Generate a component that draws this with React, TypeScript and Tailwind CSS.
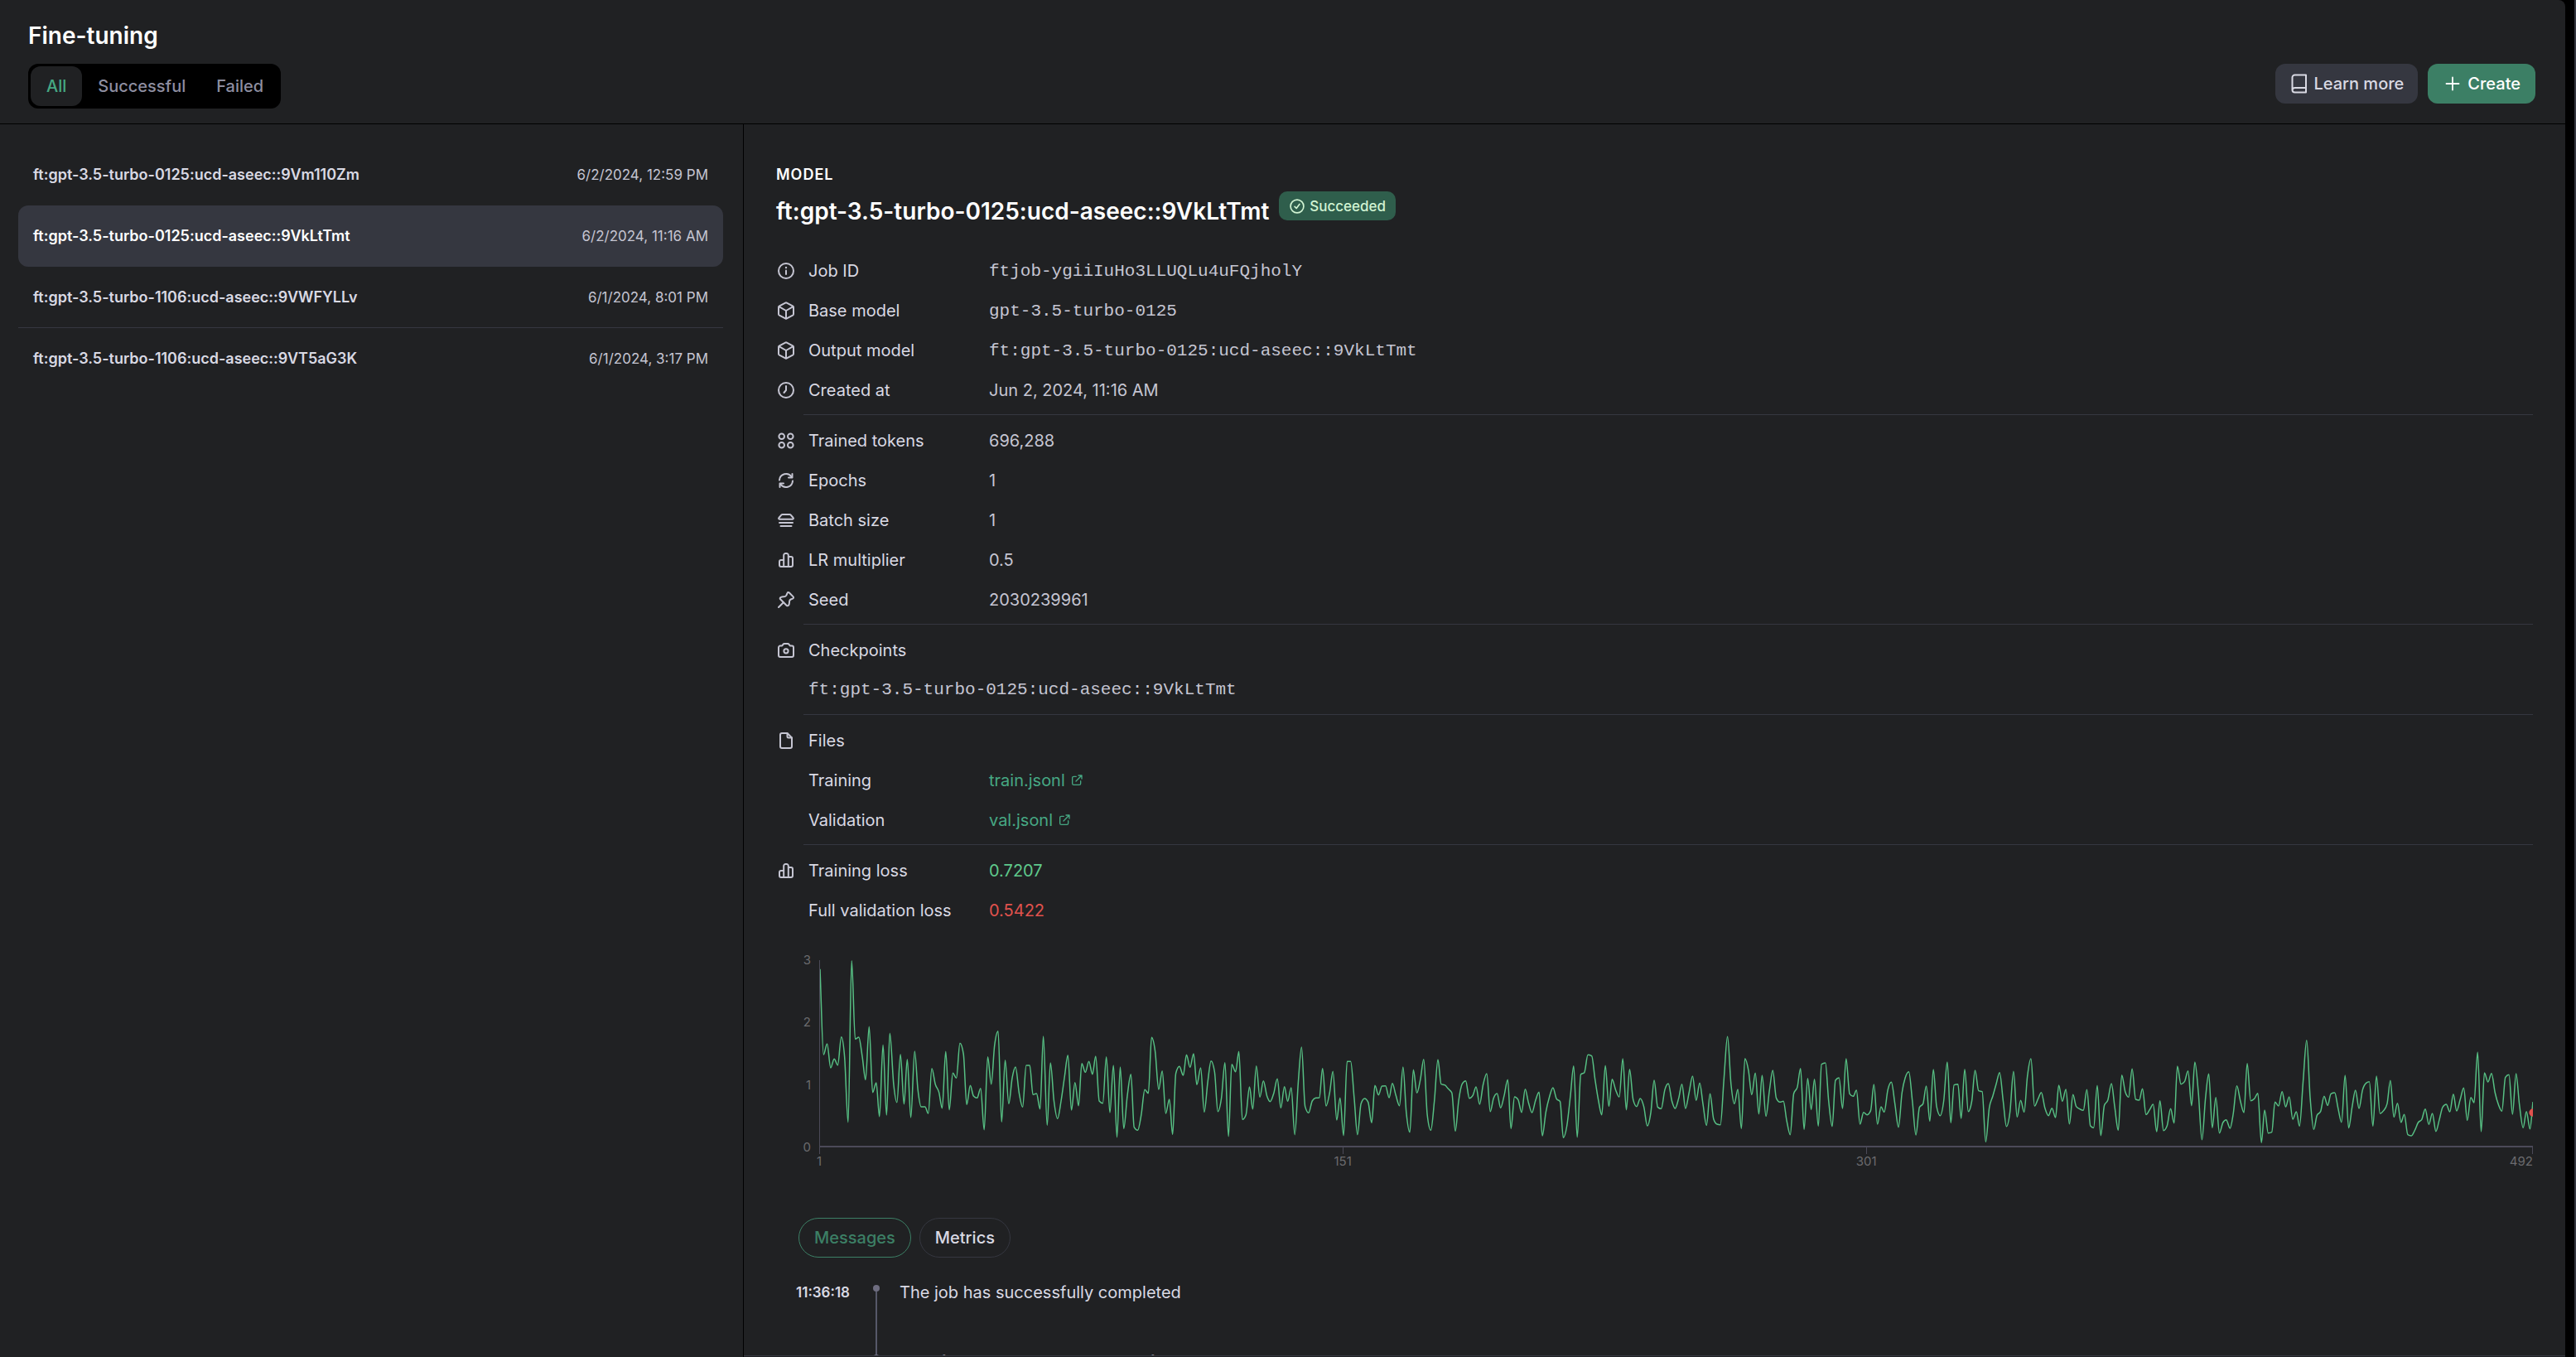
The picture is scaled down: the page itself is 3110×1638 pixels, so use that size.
import type { ReactNode } from "react";

const jobs = [
  { name: "ft:gpt-3.5-turbo-0125:ucd-aseec::9Vm110Zm", date: "6/2/2024, 12:59 PM" },
  { name: "ft:gpt-3.5-turbo-0125:ucd-aseec::9VkLtTmt", date: "6/2/2024, 11:16 AM", selected: true },
  { name: "ft:gpt-3.5-turbo-1106:ucd-aseec::9VWFYLLv", date: "6/1/2024, 8:01 PM", divider: true },
  { name: "ft:gpt-3.5-turbo-1106:ucd-aseec::9VT5aG3K", date: "6/1/2024, 3:17 PM" },
];

/* ---------- Icons ---------- */

function Icon({ children, className = "size-6" }: { children: ReactNode; className?: string }) {
  return (
    <svg
      viewBox="0 0 24 24"
      className={className}
      fill="none"
      stroke="currentColor"
      strokeWidth={2}
      strokeLinecap="round"
      strokeLinejoin="round"
      aria-hidden="true"
    >
      {children}
    </svg>
  );
}

const InfoIcon = () => (
  <Icon>
    <circle cx="12" cy="12" r="9" />
    <path d="M12 11.5v4.5" />
    <circle cx="12" cy="8" r="1.2" fill="currentColor" stroke="none" />
  </Icon>
);

const CubeIcon = () => (
  <Icon>
    <path d="M11.1 2.6a2 2 0 0 1 1.8 0l7.1 3.8a2 2 0 0 1 1 1.7v7.8a2 2 0 0 1-1 1.7l-7.1 3.8a2 2 0 0 1-1.8 0L4 17.6a2 2 0 0 1-1-1.7V8.1a2 2 0 0 1 1-1.7z" />
    <path d="M3.5 7.2 12 12l8.5-4.8M12 12v9.5" />
  </Icon>
);

const ClockIcon = () => (
  <Icon>
    <circle cx="12" cy="12" r="9" />
    <path d="M12 7v5l-2.5 3" />
  </Icon>
);

const TokensIcon = () => (
  <Icon>
    <circle cx="6.7" cy="6.7" r="3.3" />
    <circle cx="17.3" cy="6.7" r="3.3" />
    <circle cx="6.7" cy="17.3" r="3.3" />
    <circle cx="17.3" cy="17.3" r="3.3" />
  </Icon>
);

const EpochsIcon = () => (
  <Icon>
    <path d="M4 11.5A8 8 0 0 1 18.6 7.5" />
    <path d="M19.5 4v4.5H15" />
    <path d="M20 12.5A8 8 0 0 1 5.4 16.5" />
    <path d="M4.5 20v-4.5H9" />
  </Icon>
);

const BatchIcon = () => (
  <Icon>
    <path d="M7.8 5h8.4a2 2 0 0 1 1.5.7l2.9 3.3c.7.9.3 1.7-.7 1.7H4.1c-1 0-1.4-.8-.7-1.7l2.9-3.3A2 2 0 0 1 7.800 5z" />
    <path d="M4 15h16M5.5 19h13" />
  </Icon>
);

const BarsIcon = () => (
  <Icon>
    <path d="M9.2 20V6.2A2.2 2.2 0 0 1 11.4 4h1.2a2.2 2.2 0 0 1 2.2 2.2V20" />
    <path d="M9.2 12H6a2 2 0 0 0-2 2v4a2 2 0 0 0 2 2h12a2 2 0 0 0 2-2V10a2 2 0 0 0-2-2h-3.200" />
  </Icon>
);

const PinIcon = () => (
  <Icon>
    <path d="M3 21l5.8-5.8" />
    <path d="M15.9 3.5l4.6 4.6c.9.9.6 2.1-.5 2.5l-2.3.9c-.9.4-1.3.9-1.5 1.8l-.5 3.9c-.1.7-.4 1.2-.9 1.7-.5.6-1.4.6-2 .1L5.1 11.3c-.6-.6-.5-1.5.1-2 .5-.5 1-.8 1.7-.9l3.8-.5c.9-.2 1.4-.6 1.8-1.5l.9-2.3c.4-1.2 1.6-1.5 2.500-.6z" />
  </Icon>
);

const CameraIcon = () => (
  <Icon>
    <path d="M5 6.5h2.2l1.2-1.7A2 2 0 0 1 10 4h4a2 2 0 0 1 1.6.8l1.2 1.7H19a2 2 0 0 1 2 2V18a2 2 0 0 1-2 2H5a2 2 0 0 1-2-2V8.5a2 2 0 0 1 2-2z" />
    <circle cx="12" cy="12.8" r="2.6" />
  </Icon>
);

const FileIcon = () => (
  <Icon>
    <path d="M13.5 3H7a2 2 0 0 0-2 2v14a2 2 0 0 0 2 2h10a2 2 0 0 0 2-2V8.5z" />
    <path d="M13.5 3.2V7a1.5 1.5 0 0 0 1.5 1.5h3.8" />
  </Icon>
);

const ExternalIcon = () => (
  <Icon className="size-4">
    <path d="M11 5H6.5A2.5 2.5 0 0 0 4 7.5v10A2.5 2.5 0 0 0 6.5 20h10a2.5 2.5 0 0 0 2.5-2.5V13" />
    <path d="M15 3h6v6M20.5 3.5 10.5 13.5" />
  </Icon>
);

const BookIcon = () => (
  <Icon>
    <path d="M20 1.5H6.500a3 3 0 0 0-3 3v15a3 3 0 0 0 3 3H20zM4 18.5a3 3 0 0 1 2.5-1.5H20" />
  </Icon>
);

/* ---------- Loss chart ---------- */

/* Samples of the loss curve as x,y pairs on a canvas of 5791 x 675 units, each run counted from its own left edge. */
const runs = [
  {
    start: -138,
    points:
      "138,122 150,432 162,393 174,480 186,448 198,470 210,368 221,440 233,677 245,92 257,376 269,369 281,440 292,523 304,331 316,569 328,534 339,656 351,397 363,651 374,355 387,540 398,605 410,431 422,611 433,449 445,660 458,420 469,560 480,621 493,621 504,645 516,482 528,540 540,568 551,626 563,421 575,632 587,499 599,517 611,391 623,430 634,613 646,544 657,582 669,589 681,554 693,704 705,440 717,539 728,400 740,347 752,676 764,452 776,610 788,515 799,477 811,570 823,622 835,471 847,471 858,577 870,573 882,629 893,366 906,688 917,462 929,600 941,664 953,600 965,510 976,434 988,633 1000,533 1012,617 1023,464 1035,496 1047,457 1059,503 1070,438 1082,600 1094,608 1106,440 1118,642 1130,471 1142,731 1153,477 1165,700 1177,580 1189,503 1200,695 1212,706 1224,650 1236,559 1248,572 1259,370 1271,420 1283,558 1295,491 1307,645 1319,594 1330,721 1341,500 1353,475 1366,507 1377,433 1389,478 1401,429 1412,541 1425,480 1437,640 1449,530 1460,455 1472,495 1483,638 1495,590 1507,461 1519,728 1530,467 1543,494 1554,421",
  },
  {
    start: 1374,
    points:
      "54,667 66,650 78,549 89,629 101,473 113,586 125,527 137,582 148,602 160,572 172,520 184,625 196,548 207,601 219,552 231,722 243,530 254,405 266,620 278,643 290,600 302,589 314,588 325,482 337,618 349,570 360,493 373,669 384,589 396,725 408,457 420,457 432,590 443,722 455,610 467,591 479,604 491,679 502,544 514,578 526,546 538,545 550,588 561,536 573,580 585,617 597,477 608,640 620,713 632,487 644,571 656,520 667,449 679,650 691,706 703,600 715,450 726,539 738,542 750,556 762,570 774,709 785,600 797,538 809,527 821,590 833,580 844,549 856,612 868,540 880,501 892,638 903,590 915,573 927,625 939,580 951,523 962,700 974,585 986,595 998,641 1010,557 1021,605 1033,642 1045,598 1057,568 1068,726 1080,640 1092,585 1104,552 1116,592 1128,602 1139,733 1151,690 1163,580 1174,473 1186,731 1198,504 1210,497 1222,433 1235,437 1246,520 1258,600 1269,650 1281,472 1293,619 1304,521 1316,560 1328,585 1340,447 1352,632 1363,485 1375,595 1387,620 1399,591 1411,620 1423,690 1435,640 1446,525 1458,622 1470,628 1482,560 1494,537 1506,600 1517,627 1529,590 1540,539",
  },
  {
    start: 2886,
    points:
      "40,627 52,570 64,510 76,598 88,535 99,610 111,688 123,574 135,665 147,684 158,686 170,520 182,367 194,540 205,610 217,558 229,700 241,446 253,490 264,577 276,499 288,647 299,507 312,655 324,560 335,489 347,590 359,604 371,601 382,670 394,722 406,573 418,550 429,482 441,703 453,518 465,631 476,521 489,691 500,467 513,462 524,600 536,692 547,525 559,516 571,627 583,447 595,574 607,583 618,561 630,684 642,641 654,650 666,635 677,540 689,684 701,621 712,640 724,560 736,532 748,610 760,695 772,570 783,515 795,494 807,600 819,723 831,623 843,610 854,546 866,673 878,486 889,620 901,653 913,600 925,459 937,679 948,542 961,539 972,663 984,485 996,638 1008,600 1019,489 1031,563 1043,566 1055,748 1067,625 1079,582 1090,540 1102,497 1114,600 1125,692 1137,640 1149,493 1161,658 1173,598 1185,640 1196,510 1208,447 1220,618 1232,592 1243,569 1255,625 1267,653 1279,626 1291,660 1302,543 1314,601 1326,558 1338,683 1350,577 1361,620 1373,629 1385,634 1397,559 1409,690 1420,697 1432,544 1444,725 1456,616 1468,596 1480,537 1491,620 1503,706 1515,506 1527,568 1538,586 1550,484",
  },
  {
    start: 4370,
    points:
      "78,594 90,597 101,556 113,649 125,632 137,612 149,711 160,599 172,707 184,690 196,628 208,680 219,474 231,539 243,530 255,491 267,617 278,459 290,570 302,740 314,590 325,502 337,697 349,587 361,716 373,678 384,668 397,699 408,645 420,545 432,600 444,642 455,464 467,599 479,592 491,572 503,751 514,633 526,716 538,713 549,604 561,618 573,566 585,621 597,585 609,666 621,639 632,691 644,530 656,380 668,590 680,703 691,652 703,638 715,583 727,616 738,574 751,570 762,625 774,677 786,507 798,698 810,620 821,561 833,627 845,560 857,535 868,530 880,691 892,510 904,645 916,635 928,610 939,526 951,658 963,608 975,677 986,649 998,722 1010,726 1022,705 1033,678 1045,667 1057,629 1069,685 1081,645 1093,710 1104,670 1116,622 1128,612 1140,639 1152,575 1163,636 1175,595 1187,553 1199,670 1211,587 1222,606 1234,423 1246,711 1257,498 1269,531 1281,500 1293,570 1305,615 1316,637 1328,514 1340,505 1352,648 1364,501 1375,610 1388,697 1399,638 1411,701 1421,603",
  },
];

const CHART_W = 5791;
const CHART_H = 675;

const samples: [number, number][] = runs.flatMap(({ start, points }) =>
  points.split(" ").map((pair): [number, number] => {
    const [x, y] = pair.split(",").map(Number);
    return [start + x, y - 90];
  }),
);

/* Monotone cubic interpolation, so that the curve never overshoots a sample. */
function monotonePath(p: [number, number][]) {
  const n = p.length;
  const slope: number[] = [];
  for (let i = 0; i < n - 1; i++) slope.push((p[i + 1][1] - p[i][1]) / (p[i + 1][0] - p[i][0]));
  const tangent = p.map((_, i) => {
    if (i === 0) return slope[0];
    if (i === n - 1) return slope[n - 2];
    const a = slope[i - 1];
    const b = slope[i];
    if (a * b <= 0) return 0;
    return Math.sign(a) * Math.min(Math.abs(a), Math.abs(b), Math.abs(a + b) / 4) * 2;
  });
  let d = `M${p[0][0]},${p[0][1]}`;
  for (let i = 0; i < n - 1; i++) {
    const h = (p[i + 1][0] - p[i][0]) / 3;
    d += `C${(p[i][0] + h).toFixed(1)},${(p[i][1] + tangent[i] * h).toFixed(1)} ${(p[i + 1][0] - h).toFixed(1)},${(
      p[i + 1][1] -
      tangent[i + 1] * h
    ).toFixed(1)} ${p[i + 1][0]},${p[i + 1][1]}`;
  }
  return d;
}

const lossPath = monotonePath(samples);

const xTicks = [
  { label: "1", left: "0%", align: "-translate-x-1/2" },
  { label: "151", left: "30.55%", align: "-translate-x-1/2" },
  { label: "301", left: "61.1%", align: "-translate-x-1/2" },
  { label: "492", left: "100%", align: "-translate-x-full" },
];

function LossChart() {
  return (
    <figure aria-label="Training loss per step" className="flex gap-[10px] text-[15px] leading-[15px] text-[#6b6b6e]">
      <div className="-my-2 flex h-[241px] w-[42px] flex-col justify-between text-right">
        {["3", "2", "1", "0"].map((v) => (
          <span key={v}>{v}</span>
        ))}
      </div>
      <div className="min-w-0 flex-1">
        <div className="relative h-[226px] border-b-2 border-l border-[#4b4a58]">
          <svg viewBox={`0 0 ${CHART_W} ${CHART_H}`} preserveAspectRatio="none" className="absolute inset-0 h-[225px] w-full">
            <path d={lossPath} fill="none" stroke="#57c084" strokeWidth={1.5} vectorEffect="non-scaling-stroke" />
            <ellipse cx={CHART_W} cy="552" rx="13" ry="14" fill="#e0524d" />
          </svg>
        </div>
        <div className="relative h-8">
          {xTicks.map((t) => (
            <div key={t.label}>
              <span
                className={t.label === "492" ? "absolute top-0 h-2 w-px -translate-x-px bg-[#4b4a58]" : "absolute top-0 h-2 w-px bg-[#4b4a58]"}
                style={{ left: t.left }}
              />
              <span className={`absolute top-[9px] ${t.align}`} style={{ left: t.left }}>
                {t.label}
              </span>
            </div>
          ))}
        </div>
      </div>
    </figure>
  );
}

/* ---------- Detail rows ---------- */

function Row({ icon, label, children }: { icon?: ReactNode; label: string; children?: ReactNode }) {
  return (
    <div className="flex h-12 items-center">
      <dt className="flex w-[257px] shrink-0 items-center text-[#d9d9e3]">
        <span className="w-[39px] shrink-0 text-[#c5c5d2]">{icon}</span>
        {label}
      </dt>
      <dd className="text-[#c5c5d2]">{children}</dd>
    </div>
  );
}

function Divider() {
  return <hr className="mt-[5px] mb-[7px] ml-[33px] border-t border-[#353740]" />;
}

const mono = "font-['Liberation_Mono',monospace] text-[21px]";

export default function App() {
  return (
    <div className="flex h-screen bg-black font-['Inter',sans-serif] text-[20px] leading-[30px] text-[#d9d9e3]">
      <div className="flex min-w-0 flex-1 flex-col overflow-hidden rounded-tr-lg bg-[#202123]">
        <header className="flex h-[150px] shrink-0 items-end justify-between border-b border-black px-9 pb-[18px] pl-[34px]">
          <div>
            <h1 className="mb-4 text-[28px] leading-9 font-semibold text-white">Fine-tuning</h1>
            <div className="flex gap-px rounded-xl bg-black p-[3px] font-medium text-[#8e8ea0]">
              <button className="h-12 rounded-xl bg-[#202123] px-[19px] text-[#46a883]">All</button>
              <button className="h-12 rounded-xl px-[18px]">Successful</button>
              <button className="h-12 rounded-xl px-[18px]">Failed</button>
            </div>
          </div>
          <div className="mb-[6px] flex gap-3 font-medium">
            <a href="#learn-more" className="flex h-12 items-center gap-[5px] rounded-xl bg-[#353740] px-[17px] text-[#d9d9e3]">
              <BookIcon />
              Learn more
            </a>
            <button className="flex h-12 items-center gap-[6px] rounded-xl bg-[#3c7f65] px-[18px] text-white">
              <Icon>
                <path d="M12 4.5v15M4.5 12h15" strokeWidth={1.8} />
              </Icon>
              Create
            </button>
          </div>
        </header>

        <div className="flex min-h-0 flex-1">
          <nav aria-label="Fine-tuning jobs" className="w-[898px] shrink-0 border-r border-black pt-6 pr-6 pl-[22px]">
            {jobs.map((job) => (
              <button
                key={job.name}
                className={
                  job.selected
                    ? "flex h-[74px] w-full items-center justify-between rounded-xl bg-[#353740] px-[18px] text-[18px] text-white"
                    : job.divider
                      ? "flex h-[74px] w-full items-center justify-between border-b border-[#353740] px-[18px] text-[18px]"
                      : "flex h-[74px] w-full items-center justify-between px-[18px] text-[18px]"
                }
              >
                <span className="font-semibold">{job.name}</span>
                <span className="text-[17px] text-[#c5c5d2]">{job.date}</span>
              </button>
            ))}
          </nav>

          <div className="flex min-w-0 flex-1 flex-col">
            <main className="min-h-0 flex-1 overflow-hidden pt-[46px] pr-[39px] pl-[39px]">
              <p className="text-[18px] leading-[30px] font-semibold tracking-[1px] text-white">MODEL</p>
              <div className="mt-[5px] flex items-start gap-3">
                <h2 className="mt-[5px] text-[28px] leading-[38px] font-semibold text-white">
                  ft:gpt-3.5-turbo-0125:ucd-aseec::9VkLtTmt
                </h2>
                <span className="flex h-[35px] items-center gap-[5px] rounded-[10px] bg-[#2f5e4c] px-3 text-[17px] font-medium text-[#d2f4d3]">
                  <Icon className="size-5">
                    <circle cx="12" cy="12" r="9.5" />
                    <path d="M8.500 12.500l2.500 2.500 4.500-6" />
                  </Icon>
                  Succeeded
                </span>
              </div>

              <dl className="mt-[29px]">
                <Row icon={<InfoIcon />} label="Job ID">
                  <span className={mono}>ftjob-ygiiIuHo3LLUQLu4uFQjholY</span>
                </Row>
                <Row icon={<CubeIcon />} label="Base model">
                  <span className={mono}>gpt-3.5-turbo-0125</span>
                </Row>
                <Row icon={<CubeIcon />} label="Output model">
                  <span className={mono}>ft:gpt-3.5-turbo-0125:ucd-aseec::9VkLtTmt</span>
                </Row>
                <Row icon={<ClockIcon />} label="Created at">
                  Jun 2, 2024, 11:16 AM
                </Row>
              </dl>
              <Divider />
              <dl>
                <Row icon={<TokensIcon />} label="Trained tokens">
                  696,288
                </Row>
                <Row icon={<EpochsIcon />} label="Epochs">
                  1
                </Row>
                <Row icon={<BatchIcon />} label="Batch size">
                  1
                </Row>
                <Row icon={<BarsIcon />} label="LR multiplier">
                  0.5
                </Row>
                <Row icon={<PinIcon />} label="Seed">
                  2030239961
                </Row>
              </dl>
              <Divider />
              <dl>
                <Row icon={<CameraIcon />} label="Checkpoints" />
                <dd className={`flex h-12 items-center pl-[39px] text-[#c5c5d2] ${mono}`}>
                  ft:gpt-3.5-turbo-0125:ucd-aseec::9VkLtTmt
                </dd>
              </dl>
              <Divider />
              <dl>
                <Row icon={<FileIcon />} label="Files" />
                <Row label="Training">
                  <a href="#train" className="flex items-center gap-[6px] text-[#46a883]">
                    train.jsonl
                    <ExternalIcon />
                  </a>
                </Row>
                <Row label="Validation">
                  <a href="#val" className="flex items-center gap-[6px] text-[#46a883]">
                    val.jsonl
                    <ExternalIcon />
                  </a>
                </Row>
              </dl>
              <Divider />
              <dl>
                <Row icon={<BarsIcon />} label="Training loss">
                  <span className="text-[#5fc98b]">0.7207</span>
                </Row>
                <Row label="Full validation loss">
                  <span className="text-[#e0524d]">0.5422</span>
                </Row>
              </dl>

              <div className="mt-9">
                <LossChart />
              </div>

              <div className="mt-[53px] ml-[27px] flex gap-[10px] font-medium" role="tablist">
                <button role="tab" aria-selected="true" className="h-12 rounded-full border border-[#3c7f65] px-[18px] text-[#3c7f65]">
                  Messages
                </button>
                <button role="tab" aria-selected="false" className="h-12 rounded-full border border-[#353740] px-[18px]">
                  Metrics
                </button>
              </div>

              <ol className="mt-[27px] ml-6">
                <li className="flex h-[84px]">
                  <time className="w-[93px] text-[17px] font-semibold">11:36:18</time>
                  <span className="flex w-2 flex-col items-center pt-[6px]">
                    <span className="size-2 shrink-0 rounded-full bg-[#6e6d80]" />
                    <span className="w-0.5 flex-1 bg-[#565869]" />
                  </span>
                  <span className="ml-6">The job has successfully completed</span>
                </li>
                <li className="flex h-[84px]">
                  <time className="w-[93px] text-[17px] font-semibold">11:36:13</time>
                  <span className="flex w-2 flex-col items-center">
                    <span className="h-[6px] w-0.5 shrink-0 bg-[#565869]" />
                    <span className="size-2 shrink-0 rounded-full bg-[#6e6d80]" />
                    <span className="w-0.5 flex-1 bg-[#565869]" />
                  </span>
                  <span className="ml-6">New fine-tuned model created: ft:gpt-3.5-turbo-0125:ucd-aseec::9VkLtTmt</span>
                </li>
              </ol>
            </main>
            <div className="h-0.5 border-t border-[#353740]" />
          </div>
        </div>
      </div>
      <div className="w-[13px] border-r-2 border-[#353740]" />
    </div>
  );
}
